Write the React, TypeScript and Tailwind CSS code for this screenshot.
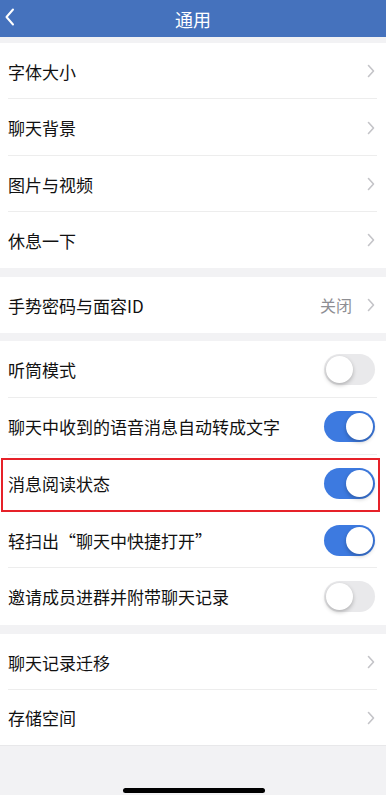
import React from "react";

const font = { fontFamily: '"Noto Sans CJK SC", "Noto Sans", sans-serif' };

function Chevron() {
  return (
    <svg width="8" height="14" viewBox="0 0 8 14" className="shrink-0">
      <path d="M1.5 1.5 L6.5 7 L1.5 12.5" fill="none" stroke="#c4c4c8" strokeWidth="1.6" strokeLinecap="round" strokeLinejoin="round" />
    </svg>
  );
}

function Toggle({ on }: { on: boolean }) {
  return (
    <div
      className={`relative w-[51px] h-[31px] rounded-full shrink-0 ${on ? "bg-[#3d7ae0]" : "bg-[#e9e9eb]"}`}
    >
      <div
        className={`absolute top-[2px] w-[27px] h-[27px] rounded-full bg-white shadow-[0_2px_4px_rgba(0,0,0,0.25)] ${on ? "left-[22px]" : "left-[2px]"}`}
      />
    </div>
  );
}

function Row({
  label,
  right,
  divider,
  h = "h-[56px]",
}: {
  label: string;
  right: React.ReactNode;
  divider?: boolean;
  h?: string;
}) {
  return (
    <div className={`relative flex items-center justify-between pl-[8px] pr-[11px] ${h}`}>
      <span className="text-[17px] text-[#111] leading-none">{label}</span>
      {right}
      {divider && <div className="absolute bottom-0 left-[8px] right-[9px] h-px bg-[#ededed]" />}
    </div>
  );
}

export default function App() {
  return (
    <div className="w-[386px] h-[795px] bg-[#f2f2f4] flex flex-col relative overflow-hidden" style={font}>
      <div className="h-[37px] bg-[#4572bd] flex items-center justify-center relative shrink-0">
        <svg width="12" height="18" viewBox="0 0 12 18" className="absolute left-[4px] top-[8px]">
          <path d="M9 1.5 L2.5 9 L9 16.5" fill="none" stroke="white" strokeWidth="2" strokeLinecap="round" strokeLinejoin="round" />
        </svg>
        <span className="text-white text-[18px] leading-none">通用</span>
      </div>

      <div className="mt-[6px] bg-white">
        <Row label="字体大小" right={<Chevron />} divider h="h-[56px]" />
        <Row label="聊天背景" right={<Chevron />} divider h="h-[57px]" />
        <Row label="图片与视频" right={<Chevron />} divider h="h-[56px]" />
        <Row label="休息一下" right={<Chevron />} h="h-[56px]" />
      </div>

      <div className="mt-[9px] bg-white">
        <Row
          label="手势密码与面容ID"
          h="h-[56px]"
          right={
            <div className="flex items-center gap-[15px]">
              <span className="text-[16px] text-[#8e8e93] leading-none">关闭</span>
              <Chevron />
            </div>
          }
        />
      </div>

      <div className="mt-[8px] bg-white">
        <Row label="听筒模式" right={<Toggle on={false} />} divider h="h-[57px]" />
        <Row label="聊天中收到的语音消息自动转成文字" right={<Toggle on />} divider h="h-[57px]" />
        <Row label="消息阅读状态" right={<Toggle on />} divider h="h-[57px]" />
        <Row label="轻扫出“聊天中快捷打开”" right={<Toggle on />} divider h="h-[56px]" />
        <Row label="邀请成员进群并附带聊天记录" right={<Toggle on={false} />} h="h-[57px]" />
      </div>

      <div className="mt-[9px] bg-white border-b border-[#e8e8ea]">
        <Row label="聊天记录迁移" right={<Chevron />} divider h="h-[56px]" />
        <Row label="存储空间" right={<Chevron />} h="h-[55px]" />
      </div>

      <div className="absolute left-[1px] top-[458px] w-[379px] h-[54px] border-2 border-[#e62129]" />

      <div className="absolute left-[123px] top-[788px] w-[142px] h-[5px] rounded-full bg-black" />
    </div>
  );
}
